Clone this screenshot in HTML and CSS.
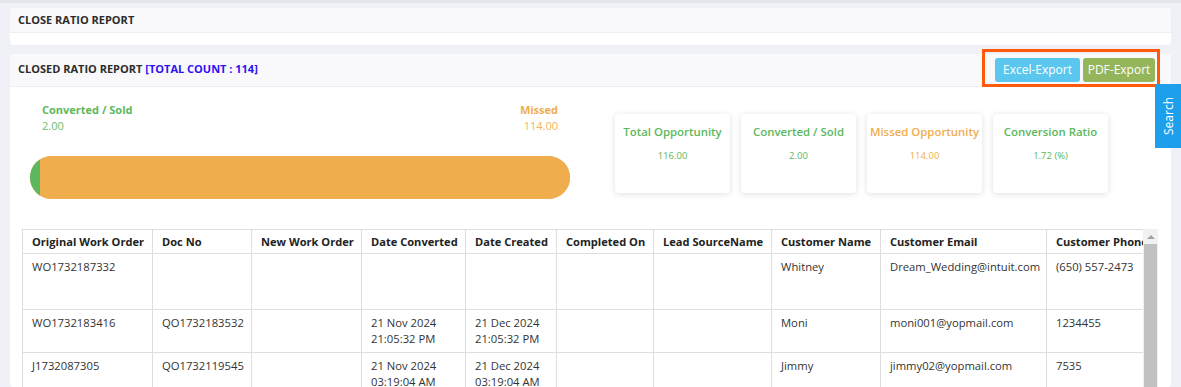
FILE: index.html
```html
<!DOCTYPE html>
<html lang="en">
<head>
    <meta charset="UTF-8">
    <meta name="viewport" content="width=device-width, initial-scale=1.0">
    <title>Close Ratio Report</title>

    <link rel="stylesheet" href="styles.css">
</head>
<body>
    <div class="topline"></div>

    <div class="page">
        <div class="card">
            <div class="card-head">CLOSE RATIO REPORT</div>
            <div class="card-body-empty"></div>
        </div>

        <div class="card">
            <div class="card-head head-tools">
                <span>CLOSED RATIO REPORT <span class="count">[TOTAL COUNT : 114]</span></span>
                <div class="botoes">
                    <button class="btn btn-excel">Excel-Export</button>
                    <button class="btn btn-pdf">PDF-Export</button>
                </div>
                <div class="marca"></div>
            </div>

            <div class="card-body">
                <div class="resumo">
                    <div class="barra-box">
                        <div class="legenda">
                            <div class="verde">
                                <div class="leg-titulo">Converted / Sold</div>
                                <div class="leg-valor">2.00</div>
                            </div>
                            <div class="laranja direita">
                                <div class="leg-titulo">Missed</div>
                                <div class="leg-valor">114.00</div>
                            </div>
                        </div>
                        <div class="barra">
                            <div class="barra-verde" style="width: 1.72%"></div>
                            <div class="barra-laranja"></div>
                        </div>
                    </div>

                    <div class="stats">
                        <div class="stat verde">
                            <div class="stat-titulo">Total Opportunity</div>
                            <div class="stat-valor">116.00</div>
                        </div>
                        <div class="stat verde">
                            <div class="stat-titulo">Converted / Sold</div>
                            <div class="stat-valor">2.00</div>
                        </div>
                        <div class="stat laranja">
                            <div class="stat-titulo">Missed Opportunity</div>
                            <div class="stat-valor">114.00</div>
                        </div>
                        <div class="stat verde">
                            <div class="stat-titulo">Conversion Ratio</div>
                            <div class="stat-valor">1.72 (%)</div>
                        </div>
                    </div>
                </div>

                <div class="tabela-box">
                    <div class="tabela-view">
                        <table class="tabela">
                            <colgroup>
                                <col style="width:130px">
                                <col style="width:99px">
                                <col style="width:110px">
                                <col style="width:104px">
                                <col style="width:91px">
                                <col style="width:97px">
                                <col style="width:118px">
                                <col style="width:109px">
                                <col style="width:166px">
                                <col style="width:135px">
                            </colgroup>
                            <thead>
                                <tr>
                                    <th>Original Work Order</th>
                                    <th>Doc No</th>
                                    <th>New Work Order</th>
                                    <th>Date Converted</th>
                                    <th>Date Created</th>
                                    <th>Completed On</th>
                                    <th>Lead SourceName</th>
                                    <th>Customer Name</th>
                                    <th>Customer Email</th>
                                    <th>Customer Phone</th>
                                </tr>
                            </thead>
                            <tbody>
                                <tr class="alta">
                                    <td>WO1732187332</td>
                                    <td></td>
                                    <td></td>
                                    <td></td>
                                    <td></td>
                                    <td></td>
                                    <td></td>
                                    <td>Whitney</td>
                                    <td>Dream_Wedding@intuit.com</td>
                                    <td>(650) 557-2473</td>
                                </tr>
                                <tr>
                                    <td>WO1732183416</td>
                                    <td>QO1732183532</td>
                                    <td></td>
                                    <td>21 Nov 2024<br>21:05:32 PM</td>
                                    <td>21 Dec 2024<br>21:05:32 PM</td>
                                    <td></td>
                                    <td></td>
                                    <td>Moni</td>
                                    <td>moni001@yopmail.com</td>
                                    <td>1234455</td>
                                </tr>
                                <tr>
                                    <td>J1732087305</td>
                                    <td>QO1732119545</td>
                                    <td></td>
                                    <td>21 Nov 2024<br>03:19:04 AM</td>
                                    <td>21 Dec 2024<br>03:19:04 AM</td>
                                    <td></td>
                                    <td></td>
                                    <td>Jimmy</td>
                                    <td>jimmy02@yopmail.com</td>
                                    <td>7535</td>
                                </tr>
                            </tbody>
                        </table>
                    </div>
                    <div class="rolagem">
                        <div class="seta"></div>
                        <div class="polegar"></div>
                    </div>
                </div>
            </div>
        </div>
    </div>

    <div class="search-tab"><span>Search</span></div>
</body>
</html>
```

FILE: styles.css
```css
*{
    box-sizing: border-box;
}

body{
    margin: 0;
    background: #f0f1f7;
    font-family: "Open Sans", "Liberation Sans", sans-serif;
    color: #333;
    overflow: hidden;
}

.topline{
    height: 3px;
    background: #e4e5eb;
}

.page{
    padding: 5px 10px 0 10px;
}

.card{
    background: #fff;
    border-radius: 4px;
    margin-bottom: 9px;
}

.card-head{
    background: #f9f9fb;
    border-bottom: 1px solid #eceef3;
    border-radius: 4px 4px 0 0;
    height: 25px;
    padding: 0 8px;
    font-size: 11px;
    font-weight: 700;
    line-height: 24px;
    color: #2b2b2b;
}

.card-body-empty{
    height: 12px;
}

.head-tools{
    position: relative;
    height: 33px;
    line-height: 30px;
    display: flex;
    justify-content: space-between;
    align-items: flex-start;
}

.count{
    color: #2a12f2;
}

.botoes{
    display: flex;
    gap: 3px;
    margin-top: 4px;
    margin-right: 8px;
}

.btn{
    border: none;
    border-radius: 3px;
    height: 24px;
    padding: 0;
    font-family: "Open Sans", "Liberation Sans", sans-serif;
    font-size: 12px;
    color: #fff;
    line-height: 24px;
    white-space: nowrap;
}

.btn-excel{
    background: #5bc7ef;
    width: 85px;
}

.btn-pdf{
    background: #95b55b;
    width: 72px;
}

/* destaque laranja em volta dos botoes */
.marca{
    position: absolute;
    top: -5px;
    right: 11px;
    width: 178px;
    height: 38px;
    border: 3px solid #ff5a0c;
}

.card-body{
    padding: 0 13px 0 12px;
    height: 300px;
}

.resumo{
    display: flex;
    align-items: flex-start;
}

.barra-box{
    width: 540px;
    margin-left: 8px;
    padding-top: 15px;
}

.legenda{
    display: flex;
    justify-content: space-between;
    padding: 0 12px;
}

.direita{
    text-align: right;
}

.verde{
    color: #5cb85c;
}

.laranja{
    color: #f0ad4e;
}

.leg-titulo{
    font-size: 11px;
    font-weight: 700;
    line-height: 16px;
}

.leg-valor{
    font-size: 11px;
    line-height: 16px;
    opacity: .9;
}

.barra{
    display: flex;
    height: 43px;
    margin-top: 22px;
    border-radius: 22px;
    overflow: hidden;
    background: #f0ad4e;
}

.barra-verde{
    background: #5cb85c;
    min-width: 10px;
}

.barra-laranja{
    flex: 1;
    background: #f0ad4e;
}

.stats{
    display: flex;
    gap: 11px;
    margin-left: 45px;
    margin-top: 27px;
}

.stat{
    width: 115px;
    height: 79px;
    background: #fff;
    border-radius: 4px;
    box-shadow: 0 1px 6px rgba(0,0,0,.13);
    text-align: center;
    padding-top: 10px;
}

.stat-titulo{
    font-size: 11.4px;
    font-weight: 600;
    line-height: 16px;
}

.stat-valor{
    font-size: 9.5px;
    line-height: 14px;
    margin-top: 9px;
}

.tabela-box{
    display: flex;
    margin-top: 30px;
    height: 280px;
}

.tabela-view{
    flex: 1;
    overflow: hidden;
}

.tabela{
    border-collapse: collapse;
    table-layout: fixed;
    width: 1159px;
    font-size: 11.25px;
}

.tabela th{
    text-align: left;
    font-size: 11.1px;
    font-weight: 700;
    color: #222;
    height: 24px;
    padding: 0 9px;
    border: 1px solid #dedede;
    white-space: nowrap;
    overflow: hidden;
}

.tabela td{
    vertical-align: top;
    padding: 5px 9px;
    line-height: 16px;
    border: 1px solid #dedede;
    color: #333;
    height: 41px;
    white-space: nowrap;
}

.tabela tr.alta td{
    height: 56px;
}

.rolagem{
    width: 15px;
    background: #f1f1f1;
    padding: 0 1px;
}

.seta{
    width: 0;
    height: 0;
    margin: 6px auto 5px;
    border-left: 4px solid transparent;
    border-right: 4px solid transparent;
    border-bottom: 4px solid #a3a3a3;
}

.polegar{
    height: 260px;
    background: #c1c1c1;
}

.search-tab{
    position: fixed;
    top: 84px;
    right: 0;
    width: 26px;
    height: 64px;
    background: #1e9fec;
    color: #fff;
    font-size: 12px;
    display: flex;
    align-items: center;
    justify-content: center;
}

.search-tab span{
    writing-mode: vertical-rl;
    transform: rotate(180deg);
}
```
